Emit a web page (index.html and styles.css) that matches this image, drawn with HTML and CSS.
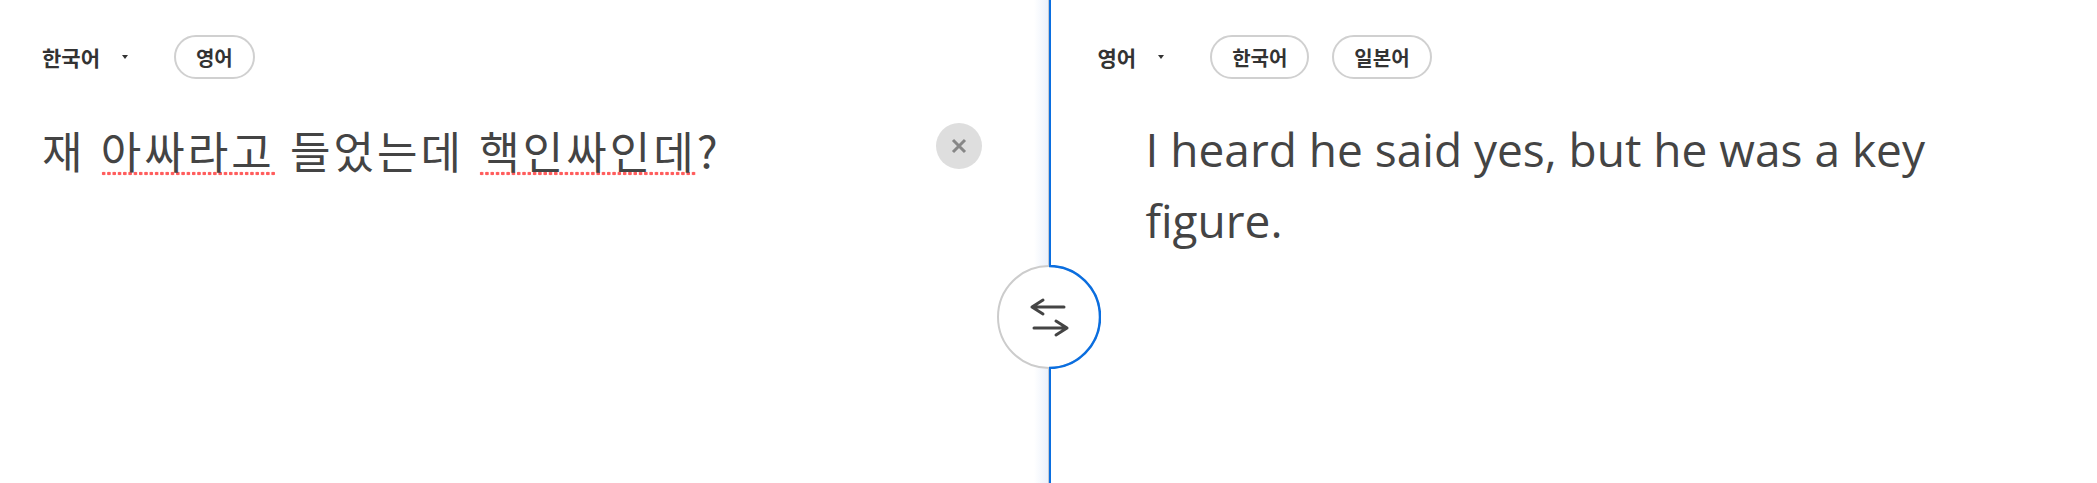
FILE: index.html
```html
<!DOCTYPE html>
<html lang="ko">
<head>
<meta charset="UTF-8" />
<meta name="viewport" content="width=device-width, initial-scale=1.0"/>
<title>Translator</title>
<link rel="stylesheet" href="styles.css">
</head>

<body>
<div class="translator">
  <section class="pane pane-source">
    <div class="lang-bar">
      <button class="lang-select">한국어<span class="caret"></span></button>
      <div class="chips">
        <button class="chip">영어</button>
      </div>
    </div>
    <div class="text-row">
      <p class="source-text">재 <span class="misspelled">아싸라고</span> 들었는데 <span class="misspelled">핵인싸인데</span>?</p>
      <button class="clear-btn" title="지우기">
        <svg width="16" height="16" viewBox="0 0 16 16">
          <path d="M2 2 L14 14 M14 2 L2 14" stroke="#878787" stroke-width="3" fill="none"/>
        </svg>
      </button>
    </div>
  </section>

  <button class="swap-btn" title="언어 바꾸기">
    <svg width="104" height="104" viewBox="0 0 104 104">
      <circle cx="52" cy="52" r="51" fill="#fff" stroke="#cccccc" stroke-width="2"/>
      <path d="M52 1 A51 51 0 0 1 52 103" fill="none" stroke="#0a6ee0" stroke-width="2.5"/>
      <path d="M35 42 H67 M35 42 L46 35 M35 42 L46 49" fill="none" stroke="#444" stroke-width="3" stroke-linecap="round"/>
      <path d="M37 63 H70 M70 63 L59 56 M70 63 L59 70" fill="none" stroke="#444" stroke-width="3" stroke-linecap="round"/>
    </svg>
  </button>

  <section class="pane pane-target">
    <div class="lang-bar">
      <button class="lang-select">영어<span class="caret"></span></button>
      <div class="chips">
        <button class="chip">한국어</button>
        <button class="chip">일본어</button>
      </div>
    </div>
    <p class="target-text">I heard he said yes, but he was a key figure.</p>
  </section>
</div>
</body>
</html>
```

FILE: styles.css
```css
body {
  margin: 0;
  font-family: "Noto Sans CJK KR", "Noto Sans", sans-serif;
  color: #333;
  background-color: #fff;
}

.translator {
  position: relative;
  display: grid;
  grid-template-columns: 1fr 1fr;
  min-height: 100vh;
}

.pane-source {
  padding: 35px 66px 0 42px;
  background: linear-gradient(to right, #fff calc(100% - 14px), #ebf1fb);
  border-right: 1px solid #c3c9d2;
}

.pane-target {
  padding: 35px 80px 0 47px;
  border-left: 2px solid #0a6ee0;
}

.lang-bar {
  display: flex;
  align-items: center;
  height: 44px;
}

.lang-select {
  display: flex;
  align-items: center;
  gap: 22px;
  margin-right: 46px;
  padding: 0;
  border: 0;
  background: none;
  font-family: "Noto Sans CJK KR", sans-serif;
  font-size: 21px;
  font-weight: bold;
  color: #333;
}

.caret {
  width: 0;
  height: 0;
  border-left: 3.5px solid transparent;
  border-right: 3.5px solid transparent;
  border-top: 4px solid #333;
}

.chips {
  display: flex;
  gap: 23px;
}

.chip {
  height: 44px;
  padding: 0 20px;
  border: 2px solid #d0d0d0;
  border-radius: 22px;
  background-color: #fff;
  font-family: "Noto Sans CJK KR", sans-serif;
  font-size: 20px;
  font-weight: bold;
  color: #333;
}

.text-row {
  display: flex;
  align-items: flex-start;
  margin-top: 40px;
}

.source-text {
  flex: 1;
  margin: 0;
  font-size: 44px;
  line-height: 63px;
  letter-spacing: 3px;
  color: #444;
}

.misspelled {
  background: radial-gradient(circle, #ff5c5c 1.6px, transparent 2.1px) 0 calc(100% - 6px) / 5.3px 5px repeat-x;
}

.clear-btn {
  width: 46px;
  height: 46px;
  margin-top: 4px;
  padding: 0;
  border: 0;
  border-radius: 50%;
  background-color: #dedede;
  display: flex;
  align-items: center;
  justify-content: center;
}

.swap-btn {
  position: absolute;
  left: 50%;
  top: 265px;
  transform: translateX(-50%);
  width: 104px;
  height: 104px;
  padding: 0;
  border: 0;
  background: none;
}

.swap-btn svg {
  display: block;
}

.target-text {
  max-width: 860px;
  margin: 35px 0 0 48px;
  font-family: "Open Sans", sans-serif;
  font-size: 46px;
  line-height: 71px;
  color: #444;
}
```
